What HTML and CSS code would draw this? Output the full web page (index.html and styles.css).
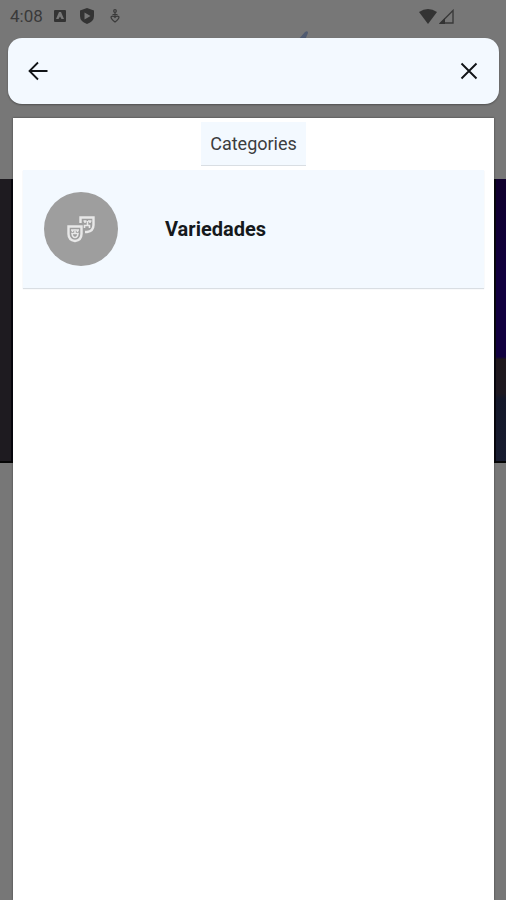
FILE: index.html
```html
<!DOCTYPE html>
<html lang="en">
<head>
<meta charset="utf-8">
<meta name="viewport" content="width=device-width, initial-scale=1">
<title>Categories</title>
<link rel="stylesheet" href="styles.css">
</head>
<body>
<div class="backdrop" aria-hidden="true">
  <div class="banner"><div class="banner-left"></div><div class="banner-right"></div></div>
  <svg class="logo-tip" width="12" height="10" viewBox="0 0 12 10"><path d="M0 10L7 2Q10 0 10 3L7 10Z" fill="#4f5a70"/></svg>
</div>
<div class="screen">
  <div class="status">
    <span class="time">4:08</span>
    <svg class="app" width="12" height="14" viewBox="0 0 12 14"><path fill="#333" fill-rule="evenodd" d="M1 1h10q1 0 1 1v10q0 1-1 1H1q-1 0-1-1V2q0-1 1-1z"/><path fill="#777" d="M5 3h2l3 7H7.500L6 7.500 4.500 10H2z"/></svg>
    <svg class="shield" width="14" height="16" viewBox="0 0 14 16"><path fill="#333" fill-rule="evenodd" d="M7 0l7 2.500V8q0 5.500-7 8Q0 13.500 0 8V2.500zM4.500 4.500v7L10.500 8z"/></svg>
    <svg class="person" width="10" height="14" viewBox="0 0 10 14" fill="none" stroke="#3a3a3a" stroke-width="1.200"><circle cx="5" cy="2" r="1.300"/><path d="M5 3.500v4M2.500 5.500h5M5 8.500Q3 6 1 8q0 2 4 5 4-3 4-5-2-2-4 .5z"/></svg>
    <span class="signals">
      <svg width="18" height="15" viewBox="0 0 18 15"><path fill="#333" d="M0 3q9-6 18 0L9 15z"/></svg>
      <svg width="15" height="15" viewBox="0 0 15 15"><path d="M1.500 14L14 1.500V14z" fill="none" stroke="#3a3a3a" stroke-width="1.400"/><path fill="#333" d="M0 15l6-6v6z"/></svg>
    </span>
  </div>
  <header class="bar">
    <button type="button" aria-label="Back"><svg width="22" height="22" viewBox="0 0 22 22" fill="none" stroke="#111417" stroke-width="1.800"><path d="M20.500 11H2.500M11 2.500L2.500 11l8.500 8.500"/></svg></button>
    <button type="button" aria-label="Close"><svg width="22" height="22" viewBox="0 0 22 22" fill="none" stroke="#111417" stroke-width="1.900"><path d="M3.500 3.500l15 15M18.500 3.500l-15 15"/></svg></button>
  </header>
  <main class="sheet">
    <h1 class="chip">Categories</h1>
    <a class="card" href="#variedades">
      <span class="avatar"><svg width="30" height="28" viewBox="0 0 30 28" fill="none" stroke="#e8e8e8" stroke-width="2.400">
        <path d="M14.500 8V2.500h13V10q0 6-6.500 7h-2"/>
        <path stroke-width="1.600" d="M17.500 6h3M22 6h3.500M19 6v2M24 6v2M21.500 6v5M18.500 13v-2.500h5V13"/>
        <path d="M2.500 11.500h13V19q0 6-6.500 7-6.500-1-6.500-7z"/>
        <path stroke-width="1.600" d="M5 15h3M10 15h3M6.500 15v2M11.500 15v2M9 14v4M6 18.500h6q-.5 4-3 4t-3-4z"/>
      </svg></span>
      <span class="name">Variedades</span>
    </a>
  </main>
</div>
</body>
</html>
```
FILE: styles.css
```css
* { box-sizing: border-box; }
body {
  margin: 0;
  background: #777;
  font-family: Roboto, sans-serif;
}
.backdrop {
  position: absolute;
  inset: 0;
  overflow: hidden;
}
.banner {
  position: absolute;
  top: 179px;
  left: 0;
  right: 0;
  height: 284px;
  display: flex;
  justify-content: space-between;
  background: #08070e;
  border-bottom: 2px solid #050505;
}
.banner-left {
  width: 11px;
  background: #1e1b20;
}
.banner-right {
  width: 10px;
  background: linear-gradient(#10002d 0, #11003f 35%, #11003f 63%, #1e171c 64%, #1e1921 76%, #14182a 78%, #181c30 100%);
}
.logo-tip {
  position: absolute;
  top: 30px;
  left: 298px;
}
.screen {
  position: relative;
  min-height: 100vh;
  display: flex;
  flex-direction: column;
}
.status {
  height: 38px;
  padding: 6px 52px 12px 10px;
  display: flex;
  align-items: center;
  color: #3a3a3a;
}
.time {
  font-size: 17px;
  line-height: 20px;
}
.app { margin-left: 11px; }
.shield { margin-left: 14px; }
.person { margin-left: 16px; }
.signals {
  margin-left: auto;
  display: flex;
  gap: 2px;
}
.bar {
  margin: 0 7px 0 8px;
  height: 66px;
  padding: 0 10px;
  display: flex;
  align-items: center;
  justify-content: space-between;
  background: #f3f9ff;
  border-radius: 14px;
  box-shadow: 0 1px 2px #0005;
}
.bar button {
  width: 40px;
  height: 40px;
  padding: 0;
  border: 0;
  background: none;
  display: grid;
  place-items: center;
}
.sheet {
  flex: 1;
  margin: 14px 12px 0 13px;
  padding: 4px 10px;
  background: #fff;
  box-shadow: 0 0 2px #0007;
}
.chip {
  width: fit-content;
  margin: 0 auto 4px;
  padding: 11px 9px 10px;
  background: #f3f9ff;
  border-bottom: 1px solid #d9dee3;
  font-size: 18px;
  font-weight: 400;
  line-height: 22px;
  color: #3b3d40;
}
.card {
  height: 118px;
  padding: 0 21px;
  display: flex;
  align-items: center;
  gap: 47px;
  background: #f3f9ff;
  box-shadow: 0 1px 1px #d9dee3;
  color: #16191c;
  text-decoration: none;
}
.avatar {
  width: 74px;
  height: 74px;
  border-radius: 50%;
  background: #9e9e9e;
  display: grid;
  place-items: center;
}
.name {
  font-size: 20px;
  font-weight: 700;
  line-height: 24px;
}
```
